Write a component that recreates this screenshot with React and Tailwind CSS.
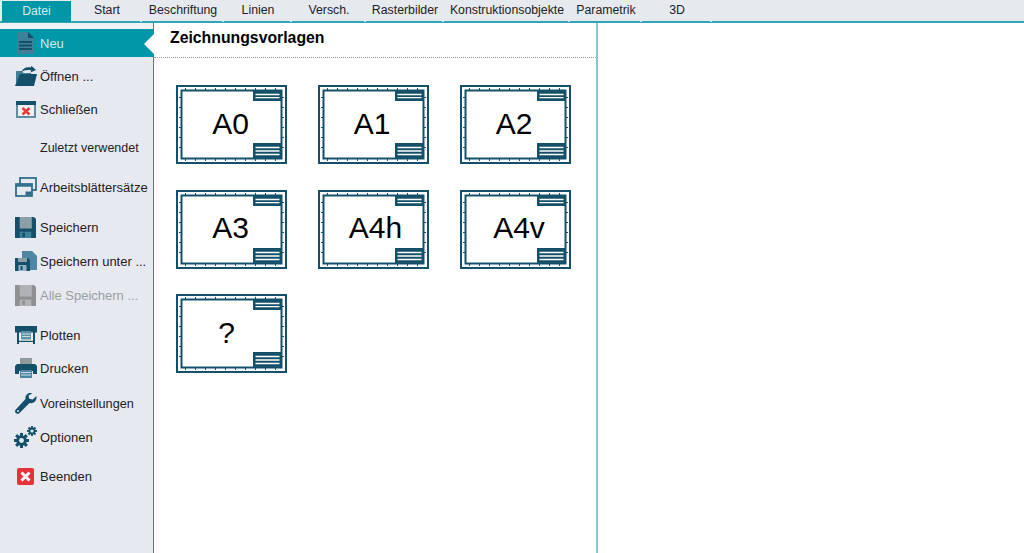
const dark = '#14506a'

const tabs = [
  ['Start', 'w-[70px]'],
  ['Beschriftung', 'w-[82px]'],
  ['Linien', 'w-[68px]'],
  ['Versch.', 'w-[74px]'],
  ['Rasterbilder', 'w-[78px]'],
  ['Konstruktionsobjekte', 'w-[126px]'],
  ['Parametrik', 'w-[72px]'],
  ['3D', 'w-[70px]'],
]

function NewIcon() {
  return (
    <svg width="17" height="22" viewBox="0 0 17 22">
      <path d="M0 0h11l6 6v16H0z" fill="#3f7f98" />
      <path d="M11 0l6 6h-6z" fill="#14506a" />
      <path d="M2 9h13v2H2zM2 12.500h13v2H2zM2 16h13v2H2z" fill="#14506a" />
    </svg>
  )
}

function OpenIcon() {
  return (
    <svg width="22" height="20" viewBox="0 0 22 20">
      <path d="M1 5h6l1.500 2H16v3H5L1 18z" fill="#3f7f98" />
      <path d="M5 8h17l-3 12H0z" fill={dark} />
      <path d="M6 6.500C8 1.500 12 .5 15.500 1.500L16.500 0 21 4l-5.500 2.500.8-2C12.500 3.500 9 4 6 6.500z" fill={dark} />
    </svg>
  )
}

function CloseIcon() {
  return (
    <svg width="20" height="17" viewBox="0 0 20 17">
      <rect x="1" y="1" width="18" height="15" fill="#eef1f4" stroke="#5f8ea3" strokeWidth="2" />
      <rect x="0" y="0" width="20" height="4" fill={dark} />
      <path d="M6.500 7l7 6.500M13.500 7l-7 6.500" stroke="#e53935" strokeWidth="2.400" />
    </svg>
  )
}

function SheetsIcon() {
  return (
    <svg width="22" height="20" viewBox="0 0 22 20" fill="none" stroke="#2f6f8a" strokeWidth="1.800">
      <rect x="5" y="1" width="16" height="12" />
      <rect x="1" y="7" width="16" height="12" fill="#e6e9ef" />
      <path d="M1 8.500h16" strokeWidth="2.400" />
      <rect x="10.500" y="14.500" width="6" height="4" fill="#2f6f8a" stroke="none" />
    </svg>
  )
}

function Floppy({ color = dark, body = '#8c9ea6', shutter = '#3f7f98', size = 21 }) {
  return (
    <svg width={size} height={size} viewBox="0 0 20 20">
      <path d="M0 0h18l2 2v18H0z" fill={color} />
      <rect x="4.500" y="0" width="11.500" height="11" fill={body} />
      <rect x="4.500" y="14" width="11" height="6" fill={shutter} />
      <rect x="7" y="15" width="2.500" height="4" fill={color} />
    </svg>
  )
}

function SaveAsIcon() {
  return (
    <svg width="22" height="20" viewBox="0 0 22 20">
      <path d="M7 0h10l5 5v14H7z" fill="#4d87a3" />
      <path d="M0 7h13l2 2v11H0z" fill={dark} />
      <rect x="3" y="7" width="9" height="4" fill="#8c9ea6" />
      <rect x="3.500" y="14" width="8" height="6" fill="#8fb2c2" />
      <rect x="5.500" y="15" width="2" height="4" fill={dark} />
    </svg>
  )
}

function PlotIcon() {
  return (
    <svg width="22" height="18" viewBox="0 0 22 18">
      <rect x="2" y="5" width="2" height="13" fill={dark} />
      <rect x="18" y="5" width="2" height="13" fill={dark} />
      <rect x="2" y="14.500" width="18" height="1.500" fill={dark} />
      <rect x="4" y="7" width="14" height="7.500" fill="#f0f3f6" />
      <rect x="0" y="0" width="22" height="6.500" fill={dark} />
      <rect x="6" y="5" width="10" height="8.500" fill="#5e90a5" />
      <path d="M7 8h8M7 10.500h8" stroke="#cfdde4" />
    </svg>
  )
}

function PrintIcon() {
  return (
    <svg width="22" height="20" viewBox="0 0 22 20">
      <rect x="5" y="0" width="12" height="7" fill="#8f9a9c" />
      <path d="M2 6h18l2 2v8h-4v-3H4v3H0V8z" fill={dark} />
      <rect x="5" y="12" width="12" height="8" fill="#4d87a3" />
      <path d="M6 14.500h10M6 17h10" stroke="#cfdde4" />
    </svg>
  )
}

function WrenchIcon() {
  return (
    <svg width="22" height="22" viewBox="0 0 22 22">
      <path
        d="M15.500 0c-3 0-5.500 2.500-5 6L0.800 16.500c-1.500 1.500-.5 3 0 3.500s2 1.500 3.500.2L14.500 10c3.500 1 7-1.500 7-5.500 0-.5 0-1-.2-1.500l-3.500 3.500-3.500-.8-.8-3L17.200.2C16.700 0 16 0 15.500 0z"
        fill={dark}
      />
      <circle cx="3" cy="18" r="1" fill="#e6e9ef" />
    </svg>
  )
}

function Gear({ x, y, r }) {
  const teeth = [0, 45, 90, 135]
  return (
    <g transform={`translate(${x} ${y})`}>
      {teeth.map((a) => (
        <rect key={a} x={-r * 0.26} y={-r * 1.3} width={r * 0.52} height={r * 2.6} fill={dark} transform={`rotate(${a})`} />
      ))}
      <circle r={r * 0.9} fill={dark} />
      <circle r={r * 0.42} fill="#e6e9ef" />
    </g>
  )
}

function GearsIcon() {
  return (
    <svg width="23" height="22" viewBox="0 0 23 22">
      <Gear x={7.500} y={14.500} r={5.800} />
      <Gear x={18} y={5} r={3.800} />
    </svg>
  )
}

function ExitIcon() {
  return (
    <svg width="17" height="17" viewBox="0 0 17 17">
      <rect width="17" height="17" rx="2" fill="#e53238" />
      <path d="M4.500 4.500l8 8M12.500 4.500l-8 8" stroke="#fff" strokeWidth="3" />
    </svg>
  )
}

const items = [
  { label: 'Öffnen ...', icon: <OpenIcon />, cls: 'mt-[3px]' },
  { label: 'Schließen', icon: <CloseIcon />, cls: 'mt-[1px]' },
  { label: 'Zuletzt verwendet', cls: 'mt-[6px] text-[12.500px]' },
  { label: 'Arbeitsblättersätze', icon: <SheetsIcon />, cls: 'mt-[8px]' },
  { label: 'Speichern', icon: <Floppy />, cls: 'mt-[8px]' },
  { label: 'Speichern unter ...', icon: <SaveAsIcon />, cls: 'mt-[2px]' },
  {
    label: 'Alle Speichern ...',
    icon: <Floppy color="#8e9092" body="#b0b3b6" shutter="#b0b3b6" />,
    cls: 'mt-[2px] text-[#9a9ea3]',
  },
  { label: 'Plotten', icon: <PlotIcon />, cls: 'mt-[8px]' },
  { label: 'Drucken', icon: <PrintIcon />, cls: 'mt-[1px]' },
  { label: 'Voreinstellungen', icon: <WrenchIcon />, cls: 'mt-[4px] text-[12.700px]' },
  { label: 'Optionen', icon: <GearsIcon />, cls: 'mt-[1px]' },
  { label: 'Beenden', icon: <ExitIcon />, cls: 'mt-[7px]' },
]

function MenuRow({ label, icon, cls }) {
  return (
    <div className={`flex items-center h-[32px] ${cls}`}>
      <span className="w-[40px] pl-[14px] pr-[3px] flex justify-center shrink-0">{icon}</span>
      <span className="whitespace-nowrap pt-[2px]">{label}</span>
    </div>
  )
}

const ticksX = [9, 19, 29, 39, 49, 59, 69, 79, 89, 99]
const ticksY = [12, 22, 32, 42, 52, 62]

function TemplateFrame() {
  return (
    <svg className="absolute inset-0" width="111" height="79" viewBox="0 0 111 79" fill="none">
      <rect x="1" y="1" width="109" height="77" stroke={dark} strokeWidth="2" />
      <rect x="5.500" y="5.500" width="100" height="68" stroke={dark} strokeWidth="2" />
      {ticksX.map((x) => (
        <path key={x} d={`M${x + 0.5} 3v2M${x + 0.5} 74v2`} stroke={dark} />
      ))}
      {ticksY.map((y) => (
        <path key={y} d={`M3 ${y + 0.5}h2M106 ${y + 0.5}h2`} stroke={dark} />
      ))}
      <rect x="77" y="6" width="28" height="10" fill={dark} />
      <path d="M79.500 9.500h24M79.500 12.700h24" stroke="#fff" strokeWidth="1.300" />
      <rect x="77" y="58" width="28" height="15" fill={dark} />
      <path d="M79.500 62.500h24M79.500 66h24M79.500 69.500h24" stroke="#fff" strokeWidth="1.300" />
    </svg>
  )
}

const templates = [
  ['A0', 'pr-[2px]'],
  ['A1', 'pr-[3px]'],
  ['A2', 'pr-[3px]'],
  ['A3', 'pr-[2px]'],
  ['A4h', 'pl-[4px]'],
  ['A4v', 'pl-[7px]'],
  ['?', 'pr-[10px]'],
]

function TemplateCard({ label, cls }) {
  return (
    <div className={`relative h-[79px] flex items-center justify-center ${cls}`}>
      <TemplateFrame />
      <span className="relative text-[30px] leading-none pb-[2px] text-black">{label}</span>
    </div>
  )
}

export default function App() {
  return (
    <div className="w-[1024px] h-[553px] flex flex-col overflow-hidden bg-white text-[13px] text-[#1c2228] font-['Liberation_Sans',Arial,sans-serif]">
      <div className="h-[23px] shrink-0 flex bg-[#e6e9ee] border-b-2 border-[#2fa5b5] pl-[2px] text-[12.300px]">
        <div className="w-[69px] h-[21px] mt-[1px] flex items-center justify-center bg-[#0097a9] text-[#cfeaee]">Datei</div>
        <div className="w-[1px]" />
        {tabs.map(([name, w]) => (
          <div key={name} className={`relative ${w} flex items-center justify-center whitespace-nowrap`}>
            {name}
            <span className="absolute right-0 -bottom-[1px] w-[2px] h-[1px] bg-[#c4e4e9]" />
          </div>
        ))}
      </div>

      <div className="flex-1 flex min-h-0">
        <div className="relative w-[154px] shrink-0 bg-[#e6e9ef] border-r border-[#1b95a6]">
          <div className="h-[6px] bg-[#f0f2f5]" />
          <div className="flex items-center h-[28px] bg-[#0097a9] text-[#cfeaee] -mr-px">
            <span className="w-[40px] pl-[14px] pr-[3px] flex justify-center shrink-0"><NewIcon /></span>
            <span className="pt-[2px]">Neu</span>
          </div>
          <svg className="absolute left-[144px] top-[11px]" width="10" height="20" viewBox="0 0 10 20">
            <path d="M10 0v20L0 10z" fill="#fff" />
          </svg>
          {items.map((it) => (
            <MenuRow key={it.label} {...it} />
          ))}
        </div>

        <div className="w-[444px] shrink-0 border-r-2 border-[#7fcbd3]">
          <div className="h-[35px] pl-[16px] pb-[4px] flex items-center border-b border-dotted border-[#9a9a9a] text-[15.800px] font-bold text-black">
            Zeichnungsvorlagen
          </div>
          <div className="pt-[27px] pl-[22px] grid grid-cols-[111px_111px_111px] gap-x-[31px] gap-y-[25.500px]">
            {templates.map(([label, cls]) => (
              <TemplateCard key={label} label={label} cls={cls} />
            ))}
          </div>
        </div>

        <div className="flex-1" />
      </div>
    </div>
  )
}
